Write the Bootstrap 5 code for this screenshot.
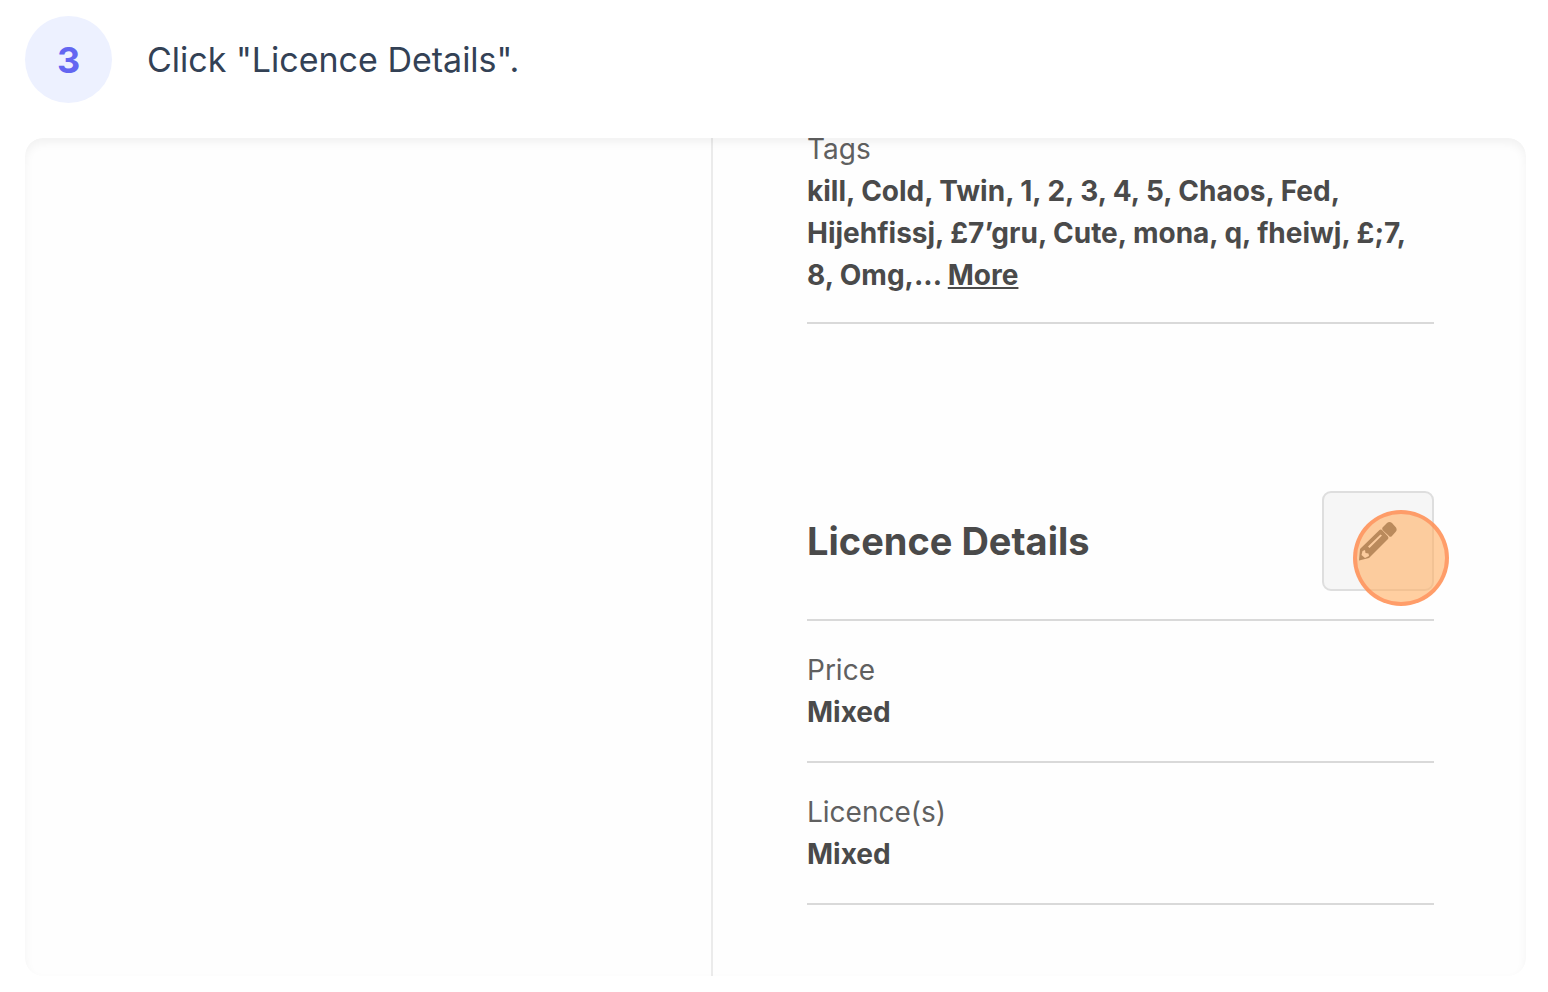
<!DOCTYPE html>
<html lang="en">
<head>
<meta charset="utf-8">
<meta name="viewport" content="width=device-width, initial-scale=1">
<title>Step 3 - Licence Details</title>
<link href="https://cdn.jsdelivr.net/npm/bootstrap@5.3.0/dist/css/bootstrap.min.css" rel="stylesheet">
<style>
  body { background: #fff; color: #4a4a4a; font-family: Inter, "Liberation Sans", sans-serif; }
  .guide { padding: 16px 22px 16px 25px; }
  .step-header { gap: 35px; margin-bottom: 35px; }
  .step-number { width: 87px; height: 87px; background: #edf1ff; color: #6366f1; font-size: 36px; }
  .step-title { color: #334155; font-size: 34px; line-height: 48px; }
  .shot { border-radius: 18px; background: #fefefe; }
  .shot::after { content: ""; position: absolute; inset: 0; border-radius: inherit; pointer-events: none;
    box-shadow: inset 0 5px 10px rgba(0, 0, 0, .05); }
  .side { flex: 0 1 688px; border-right: 2px solid #ebebeb; }
  .details { flex: 1 1 0; padding: 0 92px 0 94px; font-size: 28px; line-height: 42px; }
  .field { padding: 28px 0; border-bottom: 2px solid #d9d9d9; }
  .field dt { font-weight: 400; color: #606060; }
  .field dd { font-weight: 700; margin: 0; }
  .tags-list { margin-top: -10px; padding: 0 0 26px; }
  .section-head { margin-top: 167px; padding-bottom: 28px; border-bottom: 2px solid #d9d9d9; }
  .section-title { font-size: 38px; line-height: 48px; }
  .edit-btn { width: 112px; height: 100px; border: 2px solid #dedede; border-radius: 9px; background: #f6f6f6; color: #4a4a4a; }
  .edit-btn:hover { background: #f0f0f0; border-color: #d0d0d0; }
  .click-spot { left: 31px; top: 19px; width: 96px; height: 96px; border: 4px solid rgba(255, 130, 75, .65);
    background: rgba(255, 178, 103, .62); pointer-events: none; }
</style>
</head>
<body>
<main class="guide d-flex flex-column min-vh-100">
  <header class="step-header d-flex align-items-center">
    <span class="step-number rounded-circle d-flex align-items-center justify-content-center fw-bold flex-shrink-0">3</span>
    <h1 class="step-title fw-normal m-0">Click "Licence Details".</h1>
  </header>
  <section class="shot position-relative overflow-hidden d-flex flex-grow-1">
    <div class="side"></div>
    <div class="details">
      <dl class="field tags-list mb-0">
        <dt>Tags</dt>
        <dd>kill, Cold, Twin, 1, 2, 3, 4, 5, Chaos, Fed,<br>Hijehfissj, £7’gru, Cute, mona, q, fheiwj, £;7,<br>8, Omg,... <a href="#" class="text-reset">More</a></dd>
      </dl>
      <div class="section-head d-flex align-items-center justify-content-between">
        <h2 class="section-title fw-bold m-0">Licence Details</h2>
        <div class="position-relative">
          <button type="button" class="edit-btn btn d-flex align-items-center justify-content-center p-0" aria-label="Edit licence details">
            <svg width="40" height="40" viewBox="0 0 40 40" fill="currentColor" aria-hidden="true">
              <path fill-rule="evenodd" d="M2 28 21.500 9Q23 8 24.500 9.500L30 15.500Q31 17 30 18L11 37 1 39.500ZM4.500 30 3.500 34 7 37 11 35 10.500 32.500 7.500 32 7 29ZM10 25.500 22.500 13.500 24 14.500 11.500 27Z"/>
              <path d="M24.500 6.500 29 2Q31.500 0 34 2L38 6.500Q39.500 9 37.500 11L33.500 15.500Q31.500 16.500 30.500 14.500L25 9.500Q23.500 8 24.500 6.500Z"/>
            </svg>
          </button>
          <span class="click-spot position-absolute rounded-circle"></span>
        </div>
      </div>
      <dl class="field mb-0">
        <dt>Price</dt>
        <dd>Mixed</dd>
      </dl>
      <dl class="field mb-0">
        <dt>Licence(s)</dt>
        <dd>Mixed</dd>
      </dl>
    </div>
  </section>
</main>
<script src="https://cdn.jsdelivr.net/npm/bootstrap@5.3.0/dist/js/bootstrap.bundle.min.js"></script>
</body>
</html>
